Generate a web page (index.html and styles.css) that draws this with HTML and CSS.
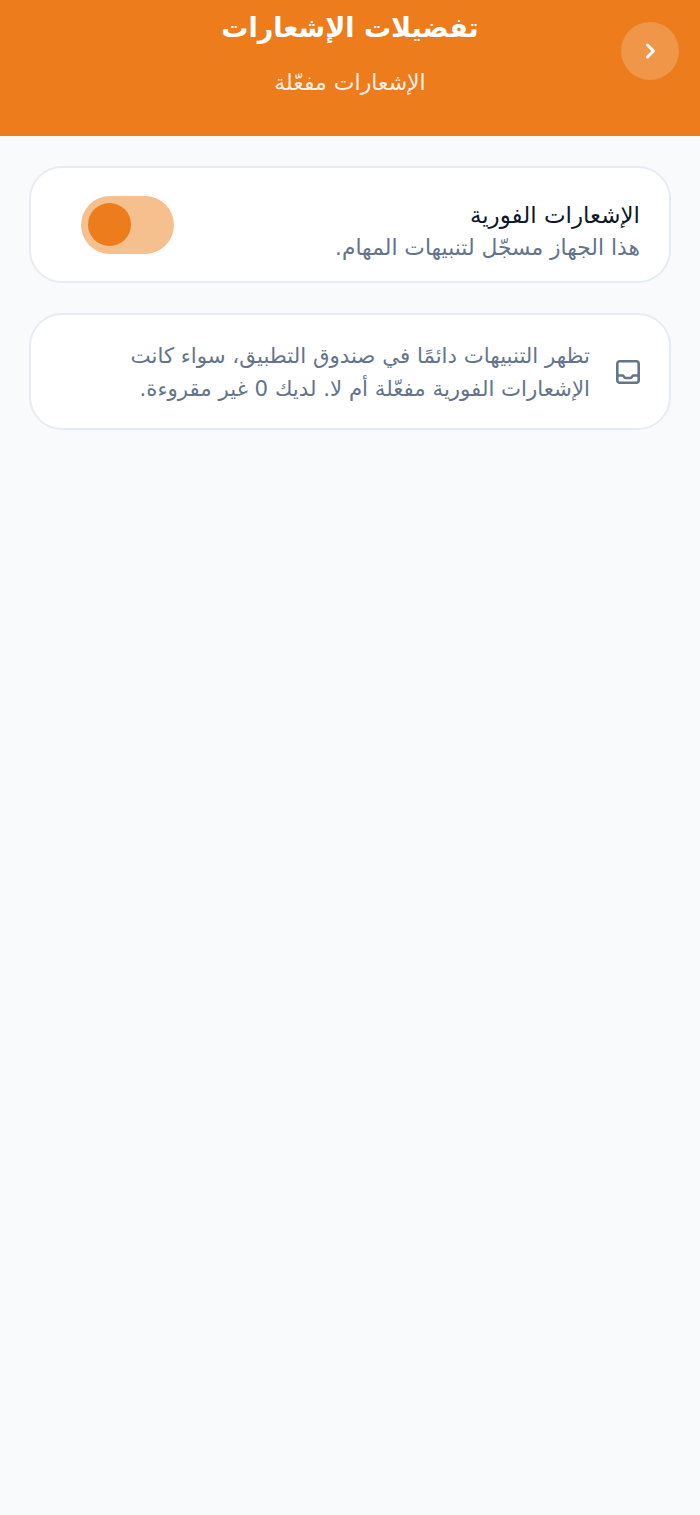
FILE: index.html

```html
<!DOCTYPE html>
<html lang="ar" dir="rtl">
<head>
  <meta charset="UTF-8" />
  <meta name="viewport" content="width=device-width, initial-scale=1.0"/>
  <title>تفضيلات الإشعارات</title>
  <link rel="stylesheet" href="styles.css">
</head>
<body>
  <header class="top-bar">
    <button class="back-btn" type="button" aria-label="رجوع">
      <svg width="24" height="24" viewBox="0 0 24 24" fill="none" stroke="#fff" stroke-width="3" stroke-linecap="round" stroke-linejoin="round">
        <path d="M9.5 6 15.5 12l-6 6"/>
      </svg>
    </button>
    <div class="top-bar-text">
      <h1>تفضيلات الإشعارات</h1>
      <p>الإشعارات مفعّلة</p>
    </div>
  </header>

  <main class="content">
    <section class="card push-card">
      <div class="push-text">
        <h2>الإشعارات الفورية</h2>
        <p>هذا الجهاز مسجّل لتنبيهات المهام.</p>
      </div>
      <div class="switch"><span class="switch-knob"></span></div>
    </section>

    <section class="card info-card">
      <svg class="inbox-icon" width="24" height="24" viewBox="0 0 24 24" fill="none" stroke="#64748b" stroke-width="2.6" stroke-linejoin="round" stroke-linecap="round">
        <rect x="1.3" y="1.3" width="21.4" height="21.4" rx="2.5"/>
        <path d="M1.3 15.5h5.7l2 2.5h6l2-2.5h5.7"/>
      </svg>
      <p>تظهر التنبيهات دائمًا في صندوق التطبيق، سواء كانت الإشعارات الفورية مفعّلة أم لا. لديك 0 غير مقروءة.</p>
    </section>
  </main>
</body>
</html>
```

FILE: styles.css

```css
* {
  box-sizing: border-box;
}

body {
  margin: 0;
  min-height: 1515px;
  font-family: "DejaVu Sans", sans-serif;
  background-color: #f8fafc;
  color: #0f172a;
}

.top-bar {
  display: grid;
  grid-template-columns: 58px 1fr 58px;
  height: 136px;
  padding: 0 21px;
  background-color: #ec7c1c;
  color: #fff;
}

.back-btn {
  display: flex;
  align-items: center;
  justify-content: center;
  width: 58px;
  height: 58px;
  margin-top: 22px;
  padding: 0;
  border: none;
  border-radius: 50%;
  background-color: rgba(255, 255, 255, 0.2);
}

.top-bar-text {
  text-align: center;
}

.top-bar-text h1 {
  margin: 8px 0 0;
  font-size: 27px;
  line-height: 40px;
  font-weight: bold;
}

.top-bar-text p {
  margin: 17px 0 0;
  font-size: 22px;
  line-height: 36px;
  color: rgba(255, 255, 255, 0.9);
}

.content {
  display: flex;
  flex-direction: column;
  gap: 30px;
  padding: 30px 29px;
}

.card {
  display: flex;
  align-items: center;
  height: 117px;
  padding: 0 29px;
  background: #fff;
  border: 2px solid #e7ecf2;
  border-radius: 33px;
}

.push-card {
  justify-content: space-between;
}

.push-text {
  padding-top: 13px;
}

.push-text h2 {
  margin: 0;
  font-size: 23px;
  line-height: 32px;
  font-weight: normal;
  color: #0f172a;
}

.push-text p {
  margin: 0;
  font-size: 21.8px;
  line-height: 33px;
  color: #64748b;
}

.switch {
  display: flex;
  align-items: center;
  width: 93px;
  height: 58px;
  margin-left: 21px;
  padding: 0 7px;
  direction: ltr;
  background-color: #f5c08e;
  border-radius: 29px;
}

.switch-knob {
  width: 43px;
  height: 43px;
  border-radius: 50%;
  background-color: #ec7c1c;
}

.info-card {
  gap: 26px;
}

.inbox-icon {
  flex: none;
}

.info-card p {
  margin: 0;
  padding-left: 20px;
  font-size: 21.3px;
  line-height: 33px;
  color: #64748b;
}
```
